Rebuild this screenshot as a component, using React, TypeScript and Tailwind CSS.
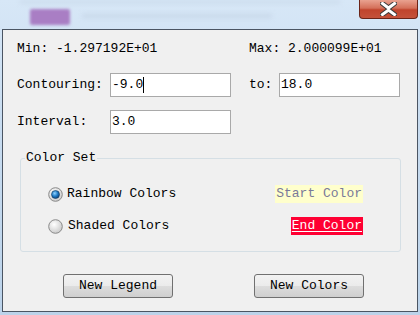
import React from "react";

const font = { fontFamily: '"Liberation Mono", "DejaVu Sans Mono", monospace' };

function Radio({ checked }: { checked: boolean }) {
  return (
    <svg width="15" height="15" viewBox="0 0 15 15">
      <defs>
        <radialGradient id="rg1" cx="40%" cy="35%" r="70%">
          <stop offset="0%" stopColor="#ffffff" />
          <stop offset="100%" stopColor="#c8c8c8" />
        </radialGradient>
        <radialGradient id="rg2" cx="40%" cy="35%" r="70%">
          <stop offset="0%" stopColor="#8fd3ff" />
          <stop offset="55%" stopColor="#1c78c4" />
          <stop offset="100%" stopColor="#0c3e72" />
        </radialGradient>
      </defs>
      <circle cx="7.5" cy="7.5" r="6.8" fill="url(#rg1)" stroke="#8a8a8a" strokeWidth="1" />
      {checked && <circle cx="7.5" cy="7.5" r="4" fill="url(#rg2)" stroke="#123a5e" strokeWidth="0.6" />}
    </svg>
  );
}

export default function App() {
  return (
    <div
      className="relative w-[420px] h-[315px] overflow-hidden flex flex-col text-[13px] text-black"
      style={{ ...font, background: "linear-gradient(180deg,#d7e7f7 0%,#c8dcf0 40%,#bcd3ea 100%)" }}
    >
      {/* title bar */}
      <div className="relative h-[29px] shrink-0">
        <div className="absolute left-[30px] top-[9px] w-[40px] h-[16px] bg-[#a97ec4] rounded-[2px] blur-[1.5px]" />
        <div className="absolute left-[82px] top-[13px] w-[190px] h-[6px] bg-[#c3d3e4] blur-[2px] opacity-50" />
        <div className="absolute left-[20px] top-0 w-[320px] h-[4px] bg-[#c4d4e4] blur-[2px] opacity-50" />
        <div
          className="absolute right-[2px] top-0 w-[59px] h-[19px] rounded-b-[4px] border border-[#6b2418] border-t-0 flex items-start justify-center pt-[2px]"
          style={{ background: "linear-gradient(180deg,#e9a290 0%,#d4705a 45%,#c0432c 55%,#c4513a 100%)" }}
        >
          <svg width="17" height="14" viewBox="0 0 17 14">
            <path d="M2.5 1.5 L8.5 6 L14.5 1.5 M2.5 12.5 L8.5 8 L14.5 12.5" stroke="#3a3a3a" strokeWidth="5" fill="none" strokeLinecap="square" />
            <path d="M2.5 1.5 L8.5 6 L14.5 1.5 M2.5 12.5 L8.5 8 L14.5 12.5" stroke="#ffffff" strokeWidth="3" fill="none" strokeLinecap="square" />
          </svg>
        </div>
      </div>

      {/* client area */}
      <div className="mx-[2px] h-[283px] border border-[#4b5563] bg-[#f0f0f0] flex flex-col pl-[14px]">
        <div className="mt-[12px] h-[14px] leading-[14px] flex">
          <span className="w-[232px]">Min: -1.297192E+01</span>
          <span>Max: 2.000099E+01</span>
        </div>
        <div className="mt-[17px] flex items-center h-[24px]">
          <span className="w-[93px]">Contouring:</span>
          <div className="w-[121px] h-[24px] border border-[#a9a9a9] bg-white flex items-center pl-[1px]">
            <span>-9.0</span>
            <span className="w-[1px] h-[16px] bg-black" />
          </div>
          <span className="ml-[18px] w-[30px]">to:</span>
          <div className="w-[121px] h-[24px] border border-[#a9a9a9] bg-white flex items-center pl-[1px]">18.0</div>
        </div>
        <div className="mt-[13px] flex items-center h-[24px]">
          <span className="w-[93px]">Interval:</span>
          <div className="w-[121px] h-[24px] border border-[#a9a9a9] bg-white flex items-center pl-[1px]">3.0</div>
        </div>
        <div className="relative mt-[24px] ml-[3px] w-[381px] h-[94px] border border-[#d5dfe5] rounded-[3px] flex flex-col">
          <span className="absolute left-[4px] top-[-9px] px-[1px] bg-[#f0f0f0] leading-[16px]">Color Set</span>
          <div className="mt-[26px] flex items-center h-[18px]">
            <div className="ml-[27px]"><Radio checked /></div>
            <span className="ml-[4px]">Rainbow Colors</span>
            <span className="ml-auto mr-[37px] h-[18px] px-[1px] bg-[#ffffcc] text-[#7a7a99] leading-[18px]">Start Color</span>
          </div>
          <div className="mt-[14px] flex items-center h-[18px]">
            <div className="ml-[27px]"><Radio checked={false} /></div>
            <span className="ml-[5px]">Shaded Colors</span>
            <span className="ml-auto mr-[37px] h-[18px] px-[1px] bg-[#ff0033] text-white leading-[18px] underline decoration-1 underline-offset-2">End Color</span>
          </div>
        </div>
        <div className="mt-[22px] flex">
          <button
            className="ml-[46px] w-[110px] h-[24px] border border-[#707070] rounded-[3px] text-[13px]"
            style={{ ...font, background: "linear-gradient(180deg,#f2f2f2 0%,#ebebeb 50%,#dddddd 51%,#cfcfcf 100%)" }}
          >
            New Legend
          </button>
          <button
            className="ml-[81px] w-[110px] h-[24px] border border-[#707070] rounded-[3px] text-[13px]"
            style={{ ...font, background: "linear-gradient(180deg,#f2f2f2 0%,#ebebeb 50%,#dddddd 51%,#cfcfcf 100%)" }}
          >
            New Colors
          </button>
        </div>
      </div>
    </div>
  );
}
